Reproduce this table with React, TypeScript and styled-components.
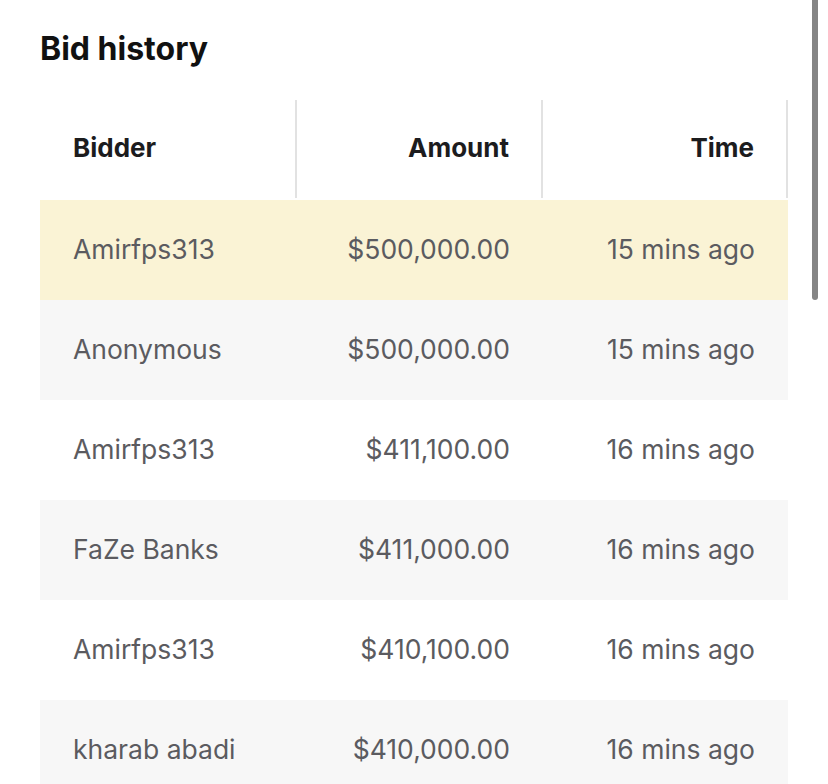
import styled, { createGlobalStyle } from "styled-components";

const GlobalStyle = createGlobalStyle`
    html, body {
        margin: 0;
        padding: 0;
        background: #ffffff;
        font-family: Inter, "Noto Sans", "Liberation Sans", sans-serif;
        overflow: hidden;
    }
`;

const Page = styled.div`
    position: relative;
    width: 100%;
    height: 784px;
    overflow: hidden;
    padding: 0 40px;
    box-sizing: border-box;
`;

const Title = styled.h2`
    margin: 31px 0 33px 0;
    font-size: 32px;
    line-height: 36px;
    font-weight: 700;
    color: #111111;
`;

const Table = styled.div`
    display: grid;
    grid-template-columns: 257px 246px 245px;
    width: 748px;
`;

const HeadCell = styled.div<{ $align?: string }>`
    height: 98px;
    margin-bottom: 2px;
    display: flex;
    align-items: center;
    justify-content: ${(p) => (p.$align === "right" ? "flex-end" : "flex-start")};
    padding: 0 32px 3px 33px;
    box-sizing: border-box;
    border-right: 2px solid #e2e2e2;
    font-size: 26px;
    font-weight: 700;
    color: #1c1c1e;
`;

const Cell = styled.div<{ $align?: string; $bg: string }>`
    height: 100px;
    display: flex;
    align-items: center;
    justify-content: ${(p) => (p.$align === "right" ? "flex-end" : "flex-start")};
    padding: 0 33px 2px 33px;
    box-sizing: border-box;
    background: ${(p) => p.$bg};
    font-size: 26.5px;
    font-weight: 400;
    color: #5b5b60;
`;

/* overlay scroll indicator in the right edge */
const ScrollThumb = styled.div`
    position: absolute;
    top: 0;
    left: 812px;
    width: 6px;
    height: 300px;
    border-radius: 0 0 3px 3px;
    background: #858585;
    z-index: 10;
`;

const bids = [
    { bidder: "Amirfps313", amount: "$500,000.00", time: "15 mins ago" },
    { bidder: "Anonymous", amount: "$500,000.00", time: "15 mins ago" },
    { bidder: "Amirfps313", amount: "$411,100.00", time: "16 mins ago" },
    { bidder: "FaZe Banks", amount: "$411,000.00", time: "16 mins ago" },
    { bidder: "Amirfps313", amount: "$410,100.00", time: "16 mins ago" },
    { bidder: "kharab abadi", amount: "$410,000.00", time: "16 mins ago" },
];

function rowColor(i: number) {
    if (i === 0) return "#faf3d5";
    return i % 2 === 1 ? "#f7f7f7" : "#ffffff";
}

function App() {
    return (
        <Page>
            <GlobalStyle />
            <Title>Bid history</Title>
            <Table>
                <HeadCell>Bidder</HeadCell>
                <HeadCell $align="right">Amount</HeadCell>
                <HeadCell $align="right">Time</HeadCell>
                {bids.flatMap((b, i) => [
                    <Cell key={"b" + i} $bg={rowColor(i)}>
                        {b.bidder}
                    </Cell>,
                    <Cell key={"a" + i} $bg={rowColor(i)} $align="right">
                        {b.amount}
                    </Cell>,
                    <Cell key={"t" + i} $bg={rowColor(i)} $align="right">
                        {b.time}
                    </Cell>,
                ])}
            </Table>
            <ScrollThumb />
        </Page>
    );
}

export default App;
